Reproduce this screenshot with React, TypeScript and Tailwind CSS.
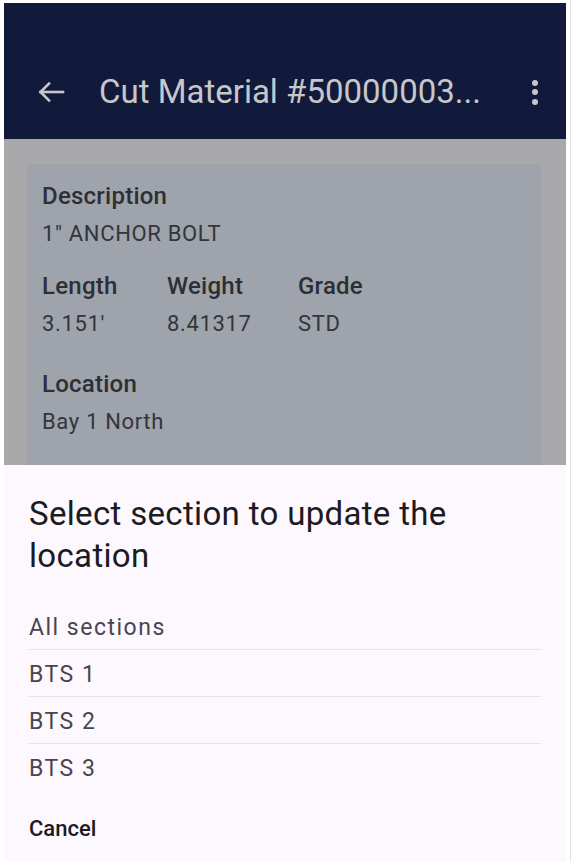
import React from "react";

const font = { fontFamily: "Roboto, 'Noto Sans', sans-serif" };

function Field({ label, value, className = "" }: { label: string; value: string; className?: string }) {
  return (
    <div className={className}>
      <div className="text-[24px] leading-[30px] font-medium tracking-[0.01em] text-[#2d2f34]">{label}</div>
      <div className="mt-[9px] text-[22px] leading-[28px] tracking-[0.03em] text-[#33353a]">{value}</div>
    </div>
  );
}

const sections = ["All sections", "BTS 1", "BTS 2", "BTS 3"];

export default function App() {
  return (
    <div className="relative h-[862px] w-[573px] overflow-hidden bg-white" style={font}>
      <div className="ml-[4px] mt-[3px] flex h-[859px] w-[562px] flex-col">
        {/* app bar, dimmed by the sheet scrim */}
        <header className="flex h-[136px] shrink-0 items-end bg-[#111a3b] pb-[25px]">
          <div className="flex h-[44px] w-full items-center">
            <svg className="ml-[32px] h-[26px] w-[30px]" viewBox="0 0 30 26" fill="none" stroke="#c7c7ca" strokeWidth="2.6" strokeLinecap="square">
              <path d="M4.5 13H27" />
              <path d="M13 4.5L4.5 13L13 21.5" />
            </svg>
            <h1 className="ml-[33px] flex-1 truncate text-[33px] leading-[44px] text-[#c7c7ca]">
              Cut Material #50000003...
            </h1>
            <div className="mr-[28px] flex flex-col items-center gap-[3.5px]">
              <span className="h-[6px] w-[6px] rounded-full bg-[#c7c7ca]" />
              <span className="h-[6px] w-[6px] rounded-full bg-[#c7c7ca]" />
              <span className="h-[6px] w-[6px] rounded-full bg-[#c7c7ca]" />
            </div>
          </div>
        </header>

        {/* page content behind scrim */}
        <div className="h-[326px] shrink-0 overflow-hidden bg-[#a9a8aa] px-[23px] pt-[25px] pr-[25px]">
          <div className="h-[360px] bg-[#9fa3ab] px-[15px] pt-[17px]">
            <Field label="Description" value={'1" ANCHOR BOLT'} />
            <div className="mt-[23px] flex">
              <Field className="w-[125px]" label="Length" value="3.151'" />
              <Field className="w-[131px]" label="Weight" value="8.41317" />
              <Field label="Grade" value="STD" />
            </div>
            <Field className="mt-[31px]" label="Location" value="Bay 1 North" />
          </div>
        </div>

        {/* bottom sheet */}
        <div className="flex-1 bg-[#fdf8fd] px-[25px] pt-[28px]">
          <h2 className="text-[33px] leading-[42px] tracking-[0.01em] text-[#1c1b1f]">Select section to update the location</h2>
          <ul className="mt-[26px]">
            {sections.map((s, i) => (
              <li
                key={s}
                className={
                  "h-[47px] pt-[11px] pb-[7px] text-[23px] leading-[28px] tracking-[0.065em] text-[#49454f] " +
                  (i < sections.length - 1 ? "border-b border-[#e6e1e6]" : "")
                }
              >
                {s}
              </li>
            ))}
          </ul>
          <button className="mt-[25px] text-[22px] leading-[26px] font-medium text-[#1c1b1f]">Cancel</button>
        </div>
      </div>
      <div className="absolute right-[2px] top-0 h-full w-[1px] bg-[#e4e4e4]" />
    </div>
  );
}
